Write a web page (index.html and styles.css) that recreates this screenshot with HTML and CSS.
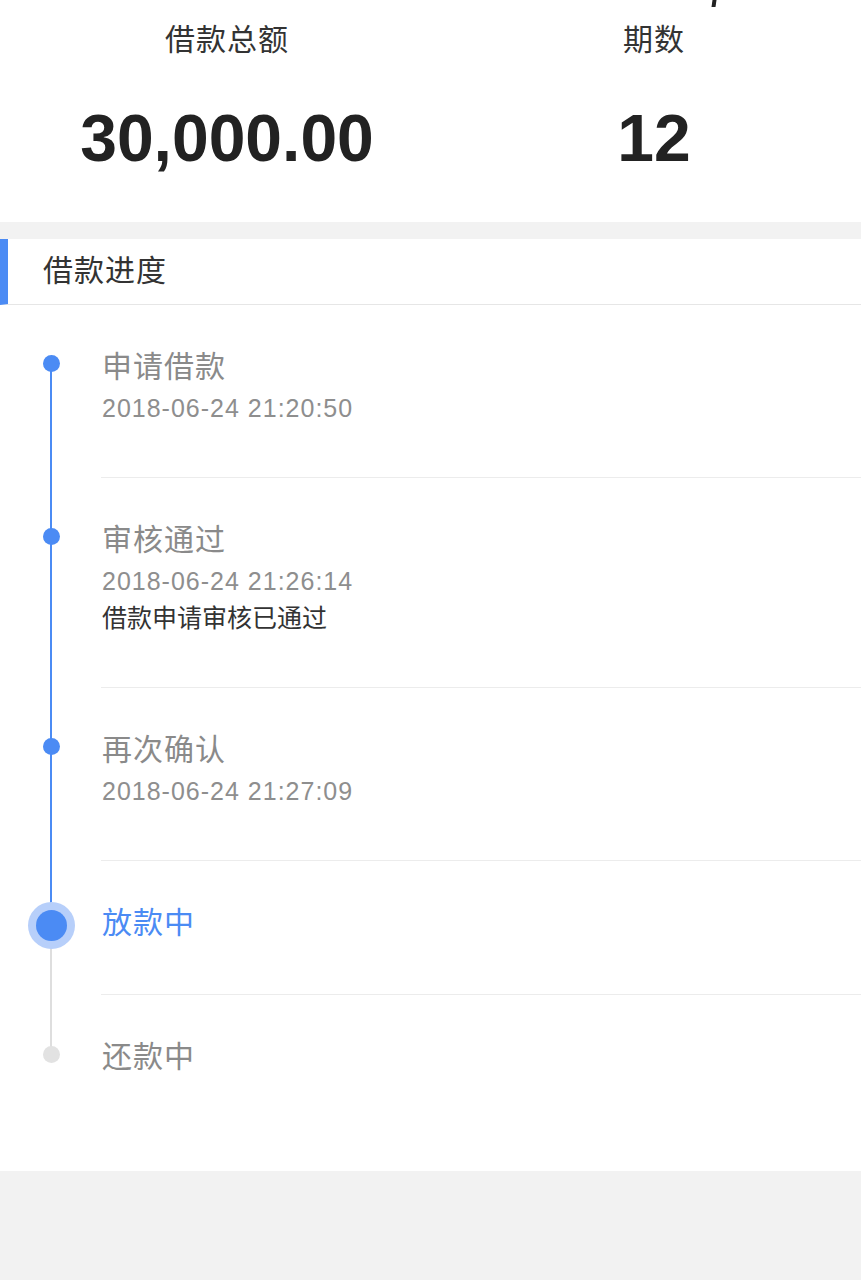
FILE: index.html
```html
<!DOCTYPE html>
<html lang="zh-CN">
<head>
    <meta charset="UTF-8">
    <meta name="viewport" content="width=device-width, initial-scale=1.0">
    <title>借款进度</title>
    <link rel="stylesheet" href="styles.css">
</head>
<body>
    <!-- 顶部：金额和期数 -->
    <section class="summary">
        <span class="cut"></span>
        <div class="cell">
            <p class="label">借款总额</p>
            <p class="value">30,000.00</p>
        </div>
        <div class="cell">
            <p class="label">期数</p>
            <p class="value">12</p>
        </div>
    </section>

    <section class="progress">
        <h2 class="head">借款进度</h2>
        <ul class="steps">
            <li class="step done first">
                <i class="dot"></i>
                <div class="body">
                    <p class="title">申请借款</p>
                    <p class="time">2018-06-24 21:20:50</p>
                </div>
            </li>
            <li class="step done">
                <i class="dot"></i>
                <div class="body">
                    <p class="title">审核通过</p>
                    <p class="time">2018-06-24 21:26:14</p>
                    <p class="note">借款申请审核已通过</p>
                </div>
            </li>
            <li class="step done">
                <i class="dot"></i>
                <div class="body">
                    <p class="title">再次确认</p>
                    <p class="time">2018-06-24 21:27:09</p>
                </div>
            </li>
            <li class="step active">
                <i class="dot"></i>
                <div class="body">
                    <p class="title">放款中</p>
                </div>
            </li>
            <li class="step todo last">
                <i class="dot"></i>
                <div class="body">
                    <p class="title">还款中</p>
                </div>
            </li>
        </ul>
    </section>
</body>
</html>
```

FILE: styles.css
```css
* {
    margin: 0;
    padding: 0;
    box-sizing: border-box;
}

body {
    background: #f2f2f2;
    font-family: "Liberation Sans", "Noto Sans CJK SC", sans-serif;
    color: #333;
}

/* 顶部汇总 */
.summary {
    position: relative;
    display: grid;
    grid-template-columns: 454px 400px;
    background: #fff;
    padding: 20px 0 44px;
}
.summary .cut {
    position: absolute;
    top: 0;
    left: 712px;
    width: 4px;
    height: 7px;
    background: #222;
    transform: skewX(-8deg);
}
.cell {
    text-align: center;
}
.label {
    font-size: 30px;
    line-height: 40px;
    letter-spacing: 1px;
    color: #333;
}
.value {
    margin-top: 38px;
    font-size: 66px;
    line-height: 80px;
    font-weight: bold;
    color: #222;
}

/* 借款进度 */
.progress {
    margin-top: 17px;
    background: #fff;
}
.head {
    height: 66px;
    padding-left: 35px;
    border-left: 8px solid #4b8bf4;
    border-bottom: 1px solid #e6e6e6;
    font-size: 30px;
    line-height: 64px;
    font-weight: normal;
    letter-spacing: 1px;
    color: #333;
}

.steps {
    list-style: none;
    padding-bottom: 43px;
}
.step {
    --c: 58px; /* 圆点中心 */
    position: relative;
    padding-left: 101px;
}
.step::before,
.step::after {
    content: "";
    position: absolute;
    left: 50px;
    width: 2px;
    background: #4b8bf4;
}
.step::before {
    top: 0;
    height: var(--c);
}
.step::after {
    top: var(--c);
    bottom: 0;
}
.step.first::before,
.step.last::after {
    display: none;
}
.step.active {
    --c: 64px;
}
.step.active::after,
.step.todo::before,
.step.todo::after {
    background: #dedede;
}
.step.last {
    --c: 59px;
}

.dot {
    position: absolute;
    z-index: 1;
    left: 43px;
    top: calc(var(--c) - 8px);
    width: 17px;
    height: 17px;
    border-radius: 50%;
    background: #4b8bf4;
}
.active .dot {
    left: 36px;
    top: calc(var(--c) - 15px);
    width: 31px;
    height: 31px;
    box-shadow: 0 0 0 8px #b7cffa;
}
.todo .dot {
    background: #e2e2e2;
}

.body {
    padding: 44px 0 53px 1px;
    border-bottom: 1px solid #ececec;
}
.last .body {
    border-bottom: none;
}
.title {
    font-size: 30px;
    line-height: 36px;
    letter-spacing: 1px;
    color: #8a8a8a;
}
.active .title {
    color: #4b8bf4;
}
.time {
    margin-top: 7px;
    font-size: 25px;
    line-height: 32px;
    letter-spacing: 1px;
    color: #8e8e8e;
}
.note {
    margin-top: 5px;
    font-size: 25px;
    line-height: 32px;
    color: #333;
}
```
